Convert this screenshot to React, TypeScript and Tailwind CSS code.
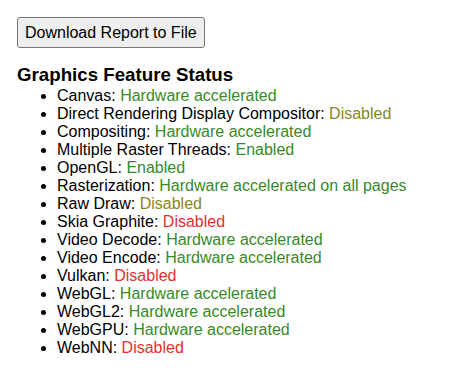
const features: { name: string; status: string; tone: "green" | "yellow" | "red" }[] = [
  { name: "Canvas", status: "Hardware accelerated", tone: "green" },
  { name: "Direct Rendering Display Compositor", status: "Disabled", tone: "yellow" },
  { name: "Compositing", status: "Hardware accelerated", tone: "green" },
  { name: "Multiple Raster Threads", status: "Enabled", tone: "green" },
  { name: "OpenGL", status: "Enabled", tone: "green" },
  { name: "Rasterization", status: "Hardware accelerated on all pages", tone: "green" },
  { name: "Raw Draw", status: "Disabled", tone: "yellow" },
  { name: "Skia Graphite", status: "Disabled", tone: "red" },
  { name: "Video Decode", status: "Hardware accelerated", tone: "green" },
  { name: "Video Encode", status: "Hardware accelerated", tone: "green" },
  { name: "Vulkan", status: "Disabled", tone: "red" },
  { name: "WebGL", status: "Hardware accelerated", tone: "green" },
  { name: "WebGL2", status: "Hardware accelerated", tone: "green" },
  { name: "WebGPU", status: "Hardware accelerated", tone: "green" },
  { name: "WebNN", status: "Disabled", tone: "red" },
];

const toneClass = {
  green: "text-[#378a28]",
  yellow: "text-[#87871f]",
  red: "text-[#e62e2e]",
};

export default function App() {
  return (
    <div className="min-h-[369px] bg-white text-black pl-[17px] pt-[17px] font-['Liberation_Sans',Arial,sans-serif]">
      <button className="h-[31px] px-[7px] border border-[#767676] rounded-[3px] bg-[#efefef] text-[16px] leading-[18px] text-black">
        Download Report to File
      </button>
      <h3 className="mt-[16px] text-[18.72px] leading-[22px] font-bold">Graphics Feature Status</h3>
      <ul className="mt-[1px] list-disc pl-[40px] text-[16px] leading-[18px]">
        {features.map((f) => (
          <li key={f.name}>
            {f.name}: <span className={toneClass[f.tone]}>{f.status}</span>
          </li>
        ))}
      </ul>
    </div>
  );
}
